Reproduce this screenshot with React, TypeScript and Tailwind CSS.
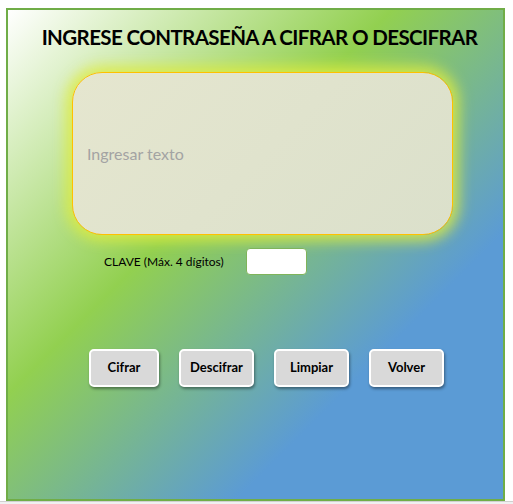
import React from 'react';

const buttons = [
  { label: 'Cifrar', w: 'w-[70px]' },
  { label: 'Descifrar', w: 'w-[75px]' },
  { label: 'Limpiar', w: 'w-[75px]' },
  { label: 'Volver', w: 'w-[75px]' },
];

export default function App() {
  return (
    <div className="w-[513px] h-[504px] bg-white overflow-hidden font-['Lato','Noto_Sans',sans-serif]">
      {/* Main panel */}
      <div className="ml-[6px] mt-[8px] w-[499px] h-[493px] border-2 border-[#70ad47] bg-[linear-gradient(135deg,#ffffff_0%,#92d050_39%,#5b9bd5_73%)] flex flex-col">
        <h1 className="mt-[13px] text-center whitespace-nowrap text-[20.5px] leading-[28px] font-bold text-black tracking-[-0.6px] pl-[8px]">
          INGRESE CONTRASEÑA A CIFRAR O DESCIFRAR
        </h1>

        {/* Text area */}
        <div className="mt-[21px] ml-[64px] w-[381px] h-[163px] rounded-[30px] border border-[#ffc000] bg-[linear-gradient(135deg,#e5e6cf,#dbe0cb)] shadow-[0_0_14px_6px_rgba(222,236,64,0.85)] flex items-center pl-[14px]">
          <span className="text-[16px] text-[#a3a3a3]">Ingresar texto</span>
        </div>

        {/* Clave */}
        <div className="mt-[13px] flex items-center">
          <span className="ml-[96px] w-[142px] text-[12px] text-black">CLAVE (Máx. 4 dígitos)</span>
          <div className="w-[61px] h-[27px] bg-white rounded-[4px] border border-[#7fb45a]" />
        </div>

        {/* Buttons */}
        <div className="mt-[74px] ml-[81px] flex gap-[20px]">
          {buttons.map((b) => (
            <button
              key={b.label}
              className={`${b.w} h-[38px] bg-[#d9d9d9] border-2 border-white rounded-[5px] shadow-[1px_2px_3px_rgba(0,0,0,0.4)] text-[13px] font-bold text-black`}
            >
              {b.label}
            </button>
          ))}
        </div>
      </div>
      <div className="h-[3px] bg-[#f0f0f0] border-t border-[#d0d0d0]" />
    </div>
  );
}
